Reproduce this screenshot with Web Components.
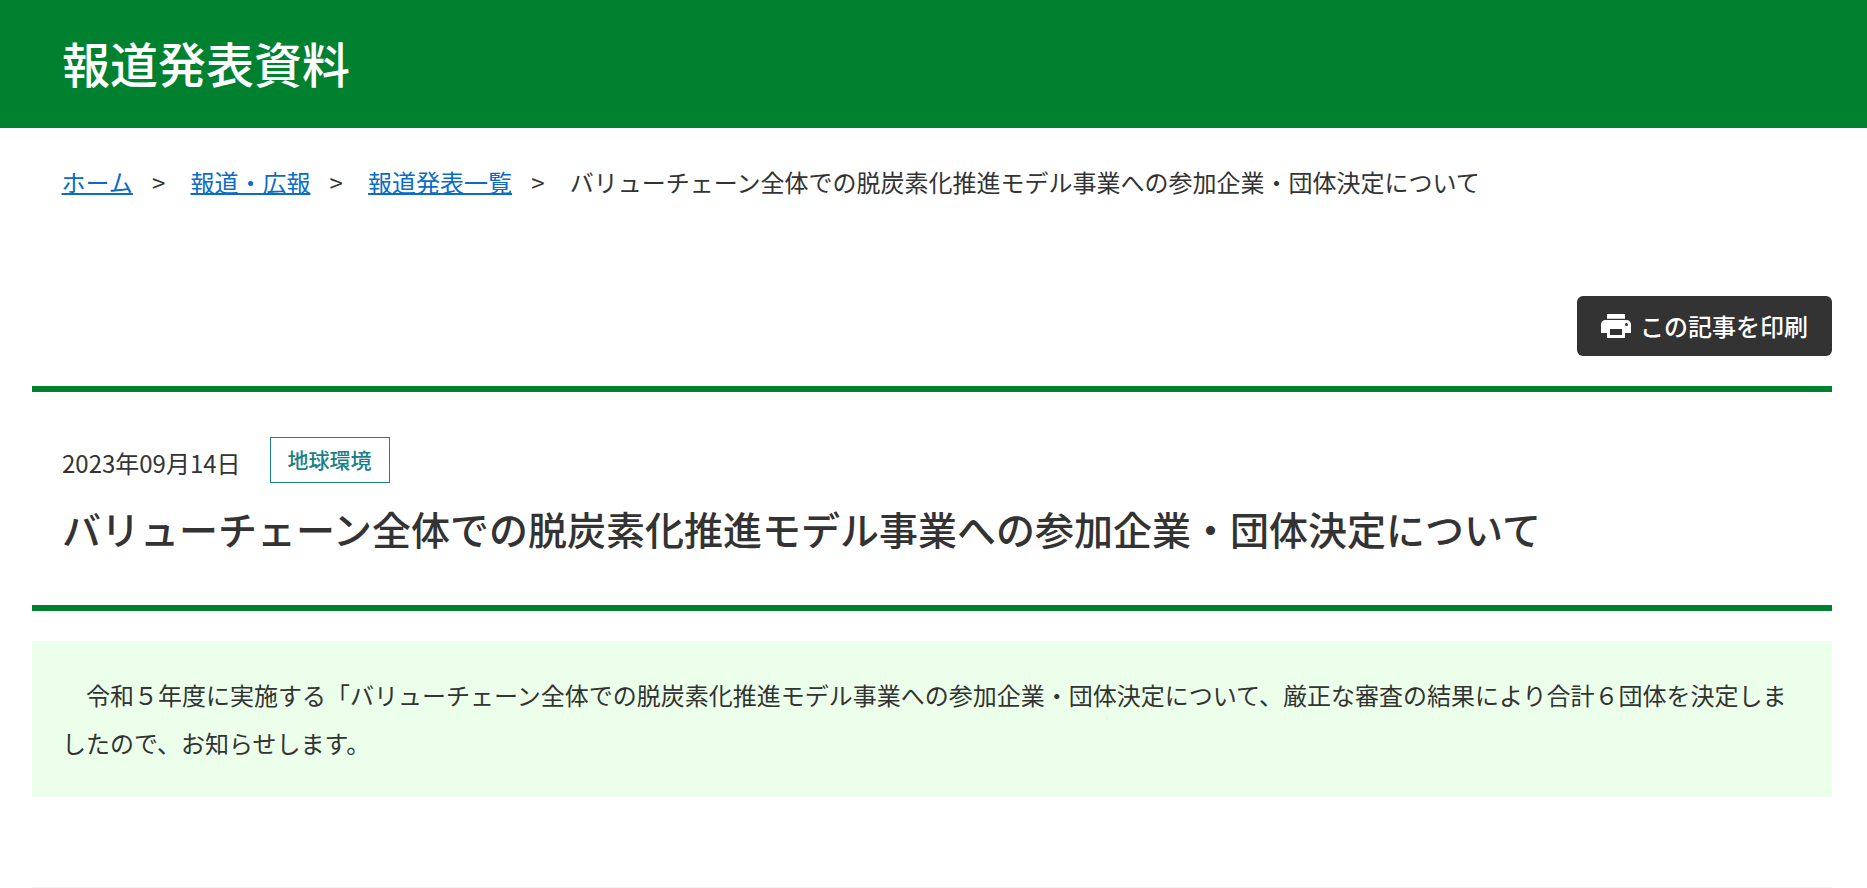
<!DOCTYPE html>
<html lang="ja">
<head>
<meta charset="UTF-8">
<title>バリューチェーン全体での脱炭素化推進モデル事業への参加企業・団体決定について</title>
<style>
    body {
        margin: 0;
        background: #fff;
        color: #333;
        font-family: "Noto Sans CJK JP", sans-serif;
        font-size: 24px;
        line-height: 48px;
    }
</style>
</head>
<body>
<press-header>報道発表資料</press-header>
<bread-crumbs>
    <crumb-item href="#">ホーム</crumb-item>
    <crumb-item href="#">報道・広報</crumb-item>
    <crumb-item href="#">報道発表一覧</crumb-item>
    <crumb-item>バリューチェーン全体での脱炭素化推進モデル事業への参加企業・団体決定について</crumb-item>
</bread-crumbs>
<press-article>
    <print-button slot="tools">この記事を印刷</print-button>
    <span slot="date">2023年09月14日</span>
    <category-tag slot="tag">地球環境</category-tag>
    <span slot="title">バリューチェーン全体での脱炭素化推進モデル事業への参加企業・団体決定について</span>
    <span slot="lead">　令和５年度に実施する「バリューチェーン全体での脱炭素化推進モデル事業への参加企業・団体決定について、厳正な審査の結果により合計６団体を決定しましたので、お知らせします。</span>
</press-article>

<script>
    class PressHeader extends HTMLElement {
        connectedCallback() {
            this.attachShadow({ mode: 'open' });
            this.shadowRoot.innerHTML = `
                <style>
                    :host {
                        display: block;
                        box-sizing: border-box;
                        height: 128px;
                        padding: 28px 62px 0;
                        background: #008130;
                        color: #fff;
                    }

                    h1 {
                        margin: 0;
                        font-size: 48px;
                        font-weight: 500;
                        line-height: 68px;
                    }
                </style>
                <h1><slot></slot></h1>
            `;
        }
    }

    class BreadCrumbs extends HTMLElement {
        connectedCallback() {
            this.attachShadow({ mode: 'open' });
            this.shadowRoot.innerHTML = `
                <style>
                    :host {
                        display: block;
                        padding: 36px 61.6px 0;
                        line-height: 36px;
                    }

                    nav {
                        display: flex;
                    }
                </style>
                <nav><slot></slot></nav>
            `;
        }
    }

    class CrumbItem extends HTMLElement {
        connectedCallback() {
            const href = this.getAttribute('href');

            this.attachShadow({ mode: 'open' });
            this.shadowRoot.innerHTML = `
                <style>
                    :host {
                        display: flex;
                    }

                    a {
                        color: #0a6bc8;
                        text-decoration: underline;
                        text-decoration-thickness: 2px;
                    }

                    .sep {
                        width: 57.6px;
                        text-align: center;
                        text-indent: -6px;
                    }
                </style>
                ${href ? `<a href="${href}"><slot></slot></a><span class="sep">&gt;</span>` : '<slot></slot>'}
            `;
        }
    }

    class PrintButton extends HTMLElement {
        connectedCallback() {
            this.attachShadow({ mode: 'open' });
            this.shadowRoot.innerHTML = `
                <style>
                    :host {
                        display: block;
                    }

                    button {
                        display: flex;
                        align-items: center;
                        gap: 9px;
                        height: 60px;
                        padding: 0 24px;
                        border: 0;
                        border-radius: 6px;
                        background: #333;
                        color: #fff;
                        font: inherit;
                        font-weight: 500;
                        line-height: 36px;
                        cursor: pointer;
                    }

                    svg {
                        display: block;
                        fill: currentColor;
                    }
                </style>
                <button type="button">
                    <svg width="30" height="24" viewBox="0 0 30 24">
                        <path fill-rule="evenodd" d="M6 0h18v4.800H6zM4.500 6h21A4.500 4.500 0 0 1 30 10.500V19h-6v5H6v-5H0v-8.500A4.500 4.500 0 0 1 4.500 6zM9 15v6h12v-6zM25.500 9a1.500 1.500 0 1 0 0 3 1.500 1.500 0 0 0 0-3z"/>
                    </svg>
                    <span><slot></slot></span>
                </button>
            `;
            this.shadowRoot.querySelector('button').addEventListener('click', () => window.print());
        }
    }

    class CategoryTag extends HTMLElement {
        connectedCallback() {
            this.attachShadow({ mode: 'open' });
            this.shadowRoot.innerHTML = `
                <style>
                    :host {
                        display: block;
                        box-sizing: border-box;
                        height: 46px;
                        padding: 0 17px;
                        border: 1px solid #1a7f86;
                        color: #1a7f86;
                        font-size: 21px;
                        font-weight: 500;
                        line-height: 42px;
                    }
                </style>
                <slot></slot>
            `;
        }
    }

    class PressArticle extends HTMLElement {
        connectedCallback() {
            this.attachShadow({ mode: 'open' });
            this.shadowRoot.innerHTML = `
                <style>
                    :host {
                        display: block;
                        width: 1800px;
                        margin: 96px 0 0 32px;
                    }

                    .tools {
                        display: flex;
                        justify-content: flex-end;
                        margin-bottom: 30px;
                    }

                    header {
                        box-sizing: border-box;
                        height: 225px;
                        padding: 45px 30px 0;
                        border-top: 6px solid #008130;
                        border-bottom: 6px solid #008130;
                    }

                    .meta {
                        display: flex;
                        gap: 29px;
                    }

                    .date {
                        padding-top: 2px;
                    }

                    h2 {
                        margin: 12px 0 0;
                        font-size: 39px;
                        font-weight: 500;
                        line-height: 58px;
                    }

                    /* Summary box */
                    .lead {
                        box-sizing: border-box;
                        height: 156px;
                        margin: 30px 0 90px;
                        padding: 30px;
                        background: #ebffea;
                    }

                    hr {
                        height: 1px;
                        margin: 0;
                        border: 0;
                        background: #f1f1f1;
                    }
                </style>

                <div class="tools"><slot name="tools"></slot></div>
                <header>
                    <div class="meta">
                        <div class="date"><slot name="date"></slot></div>
                        <slot name="tag"></slot>
                    </div>
                    <h2><slot name="title"></slot></h2>
                </header>
                <div class="lead"><slot name="lead"></slot></div>
                <hr>
            `;
        }
    }

    customElements.define('press-header', PressHeader);
    customElements.define('bread-crumbs', BreadCrumbs);
    customElements.define('crumb-item', CrumbItem);
    customElements.define('print-button', PrintButton);
    customElements.define('category-tag', CategoryTag);
    customElements.define('press-article', PressArticle);
</script>
</body>
</html>
